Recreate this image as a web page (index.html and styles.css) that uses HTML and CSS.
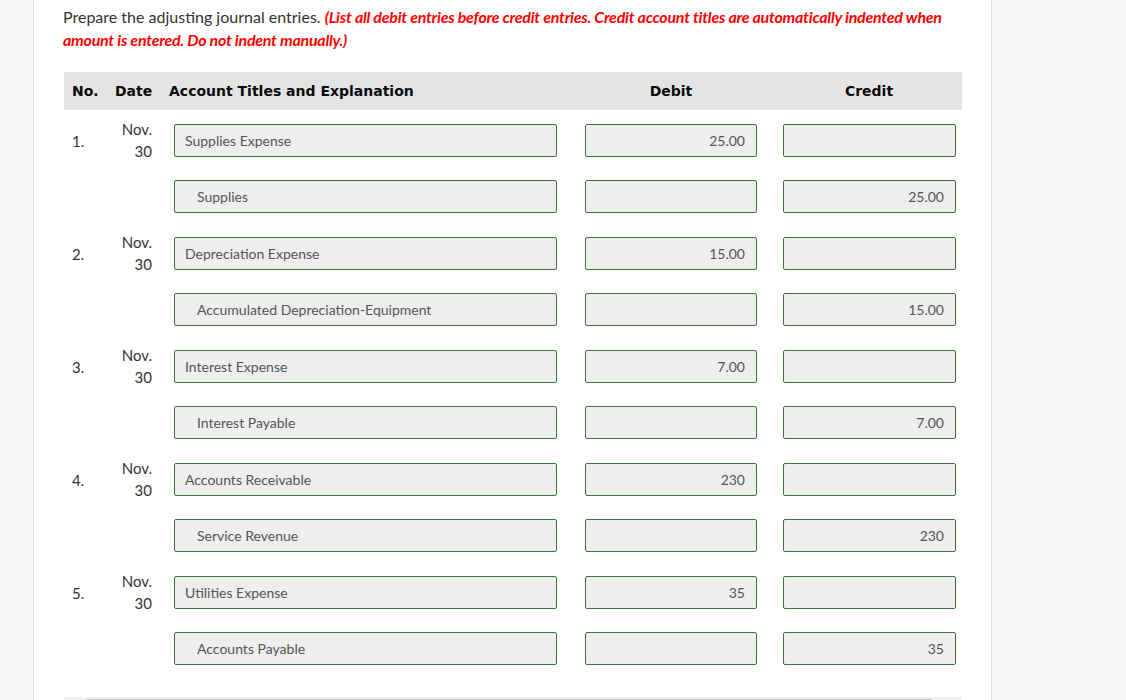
FILE: index.html
```html
<!DOCTYPE html>
<html lang="en">
<head>
<meta charset="utf-8">
<title>Adjusting Journal Entries</title>
<link rel="stylesheet" href="styles.css">
</head>
<body>
<div class="page">
  <div class="content">
    <p class="intro">Prepare the adjusting journal entries. <em class="warn">(List all debit entries before credit entries. Credit account titles are automatically indented when amount is entered. Do not indent manually.)</em></p>

    <div class="journal">
      <div class="head">
        <div class="h-no">No.</div>
        <div class="h-date">Date</div>
        <div class="h-acct">Account Titles and Explanation</div>
        <div class="h-num h-dr">Debit</div>
        <div class="h-num h-cr">Credit</div>
      </div>

      <div class="line">
        <div class="no">1.</div>
        <div class="date">Nov.<br>30</div>
        <div class="cell acct"><div class="field">Supplies Expense</div></div>
        <div class="cell dr"><div class="field num">25.00</div></div>
        <div class="cell cr"><div class="field num"></div></div>
      </div>
      <div class="line">
        <div class="no"></div>
        <div class="date"></div>
        <div class="cell acct"><div class="field indent">Supplies</div></div>
        <div class="cell dr"><div class="field num"></div></div>
        <div class="cell cr"><div class="field num">25.00</div></div>
      </div>

      <div class="line">
        <div class="no">2.</div>
        <div class="date">Nov.<br>30</div>
        <div class="cell acct"><div class="field">Depreciation Expense</div></div>
        <div class="cell dr"><div class="field num">15.00</div></div>
        <div class="cell cr"><div class="field num"></div></div>
      </div>
      <div class="line">
        <div class="no"></div>
        <div class="date"></div>
        <div class="cell acct"><div class="field indent">Accumulated Depreciation-Equipment</div></div>
        <div class="cell dr"><div class="field num"></div></div>
        <div class="cell cr"><div class="field num">15.00</div></div>
      </div>

      <div class="line">
        <div class="no">3.</div>
        <div class="date">Nov.<br>30</div>
        <div class="cell acct"><div class="field">Interest Expense</div></div>
        <div class="cell dr"><div class="field num">7.00</div></div>
        <div class="cell cr"><div class="field num"></div></div>
      </div>
      <div class="line">
        <div class="no"></div>
        <div class="date"></div>
        <div class="cell acct"><div class="field indent">Interest Payable</div></div>
        <div class="cell dr"><div class="field num"></div></div>
        <div class="cell cr"><div class="field num">7.00</div></div>
      </div>

      <div class="line">
        <div class="no">4.</div>
        <div class="date">Nov.<br>30</div>
        <div class="cell acct"><div class="field">Accounts Receivable</div></div>
        <div class="cell dr"><div class="field num">230</div></div>
        <div class="cell cr"><div class="field num"></div></div>
      </div>
      <div class="line">
        <div class="no"></div>
        <div class="date"></div>
        <div class="cell acct"><div class="field indent">Service Revenue</div></div>
        <div class="cell dr"><div class="field num"></div></div>
        <div class="cell cr"><div class="field num">230</div></div>
      </div>

      <div class="line">
        <div class="no">5.</div>
        <div class="date">Nov.<br>30</div>
        <div class="cell acct"><div class="field">Utilities Expense</div></div>
        <div class="cell dr"><div class="field num">35</div></div>
        <div class="cell cr"><div class="field num"></div></div>
      </div>
      <div class="line">
        <div class="no"></div>
        <div class="date"></div>
        <div class="cell acct"><div class="field indent">Accounts Payable</div></div>
        <div class="cell dr"><div class="field num"></div></div>
        <div class="cell cr"><div class="field num">35</div></div>
      </div>
    </div>

    <div class="hscroll"><div class="thumb"></div></div>
  </div>
</div>
</body>
</html>
```

FILE: styles.css
```css
html, body {
  margin: 0;
  padding: 0;
}

body {
  background: #f9f9f9;
  font-family: Lato, "Liberation Sans", sans-serif;
  height: 700px;
  overflow: hidden;
}

.page {
  margin-left: 33px;
  width: 957px;
  height: 700px;
  background: #fff;
  border-left: 1px solid #ddd;
  border-right: 1px solid #ddd;
}

.content {
  padding: 5px 0 0 30px;
  width: 898px;
}

.intro {
  margin: 0 0 0 -1px;
  font-size: 16px;
  line-height: 23px;
  color: #333;
}

.warn {
  color: #f00;
  font-weight: 700;
  font-style: italic;
  letter-spacing: -0.25px;
}

.journal {
  margin-top: 21px;
}

.head,
.line {
  display: grid;
  grid-template-columns: 43px 53px 411px 200px 191px;
}

.head {
  height: 38px;
  align-items: center;
  background: #e4e4e4;
  font-family: "DejaVu Sans", Verdana, sans-serif;
  font-weight: 700;
  font-size: 14px;
  color: #0a0a0a;
}

.h-no {
  padding-left: 8px;
}

.h-date {
  padding-left: 8px;
}

.h-acct {
  padding-left: 9px;
}

.h-num {
  text-align: center;
}

.h-cr {
  padding-left: 5px;
}

.head + .line {
  margin-top: 14px;
}

.line {
  height: 56.44px;
  align-items: start;
}

.no {
  font-size: 15px;
  color: #333;
  padding-left: 8px;
  line-height: 21px;
  margin-top: 7px;
}

.date {
  font-size: 15px;
  color: #333;
  text-align: right;
  padding-right: 8px;
  line-height: 22px;
  margin-top: -6px;
}

.cell {
  padding-left: 14px;
}

.acct {
  padding-right: 14px;
}

.dr {
  padding-right: 14px;
}

.cr {
  padding-left: 12px;
  padding-right: 6px;
}

.field {
  box-sizing: border-box;
  height: 33px;
  border: 1px solid #3a7634;
  border-radius: 2px;
  background: #eee;
  font-size: 14px;
  line-height: 31px;
  color: #555;
  padding: 0 10px;
  white-space: nowrap;
  overflow: hidden;
}

.field.indent {
  padding-left: 22px;
}

.field.num {
  text-align: right;
  padding-right: 11px;
}

.hscroll {
  margin-top: 9px;
  height: 10px;
  background: #f0f0f0;
  padding: 2px 29px 0 21px;
  box-sizing: border-box;
}

.thumb {
  height: 8px;
  background: #c1c1c1;
  border-radius: 4px;
}
```
